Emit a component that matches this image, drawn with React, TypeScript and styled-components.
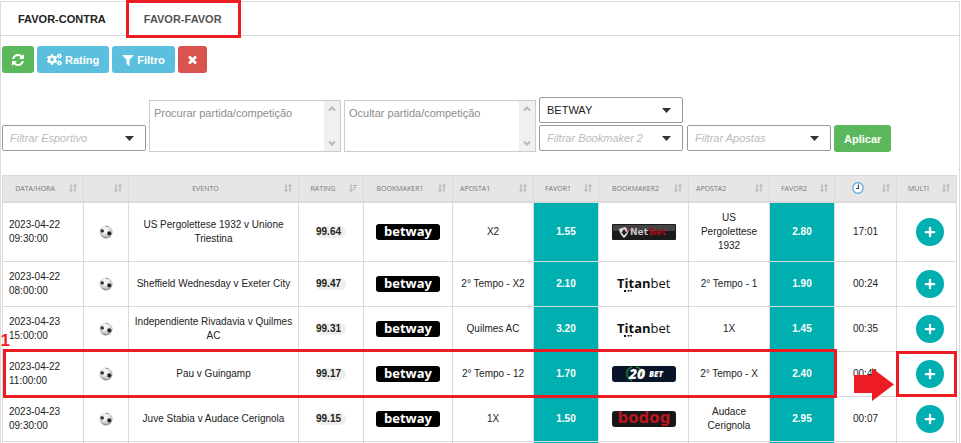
import React from "react";
import styled, { createGlobalStyle } from "styled-components";
import { FaCogs, FaPlus } from "react-icons/fa";

const GlobalStyle = createGlobalStyle`
  * { box-sizing: border-box; }
  html { overflow: hidden; }
  body {
    margin: 0;
    background: #fff;
    color: #222;
    font-family: "Liberation Sans", Arial, sans-serif;
    font-size: 10px;
    line-height: 14px;
  }
`;

const Panel = styled.main`
  margin: 1px 1px 0 0;
  border: 1px solid #dcdcdc;
  border-bottom: 0;
`;

const Tabs = styled.nav`
  display: flex;
  height: 34px;
  border-bottom: 1px solid #dcdcdc;
`;

const Tab = styled.button<{ $current?: boolean }>`
  position: relative;
  border: 0;
  background: none;
  padding: 0 17px;
  margin-right: 4px;
  font: bold 11px "Liberation Sans", Arial, sans-serif;
  color: ${(p) => (p.$current ? "#555" : "#222")};
`;

const TabMark = styled.span`
  position: absolute;
  inset: -2px -2px -3px -1px;
  border: 3px solid #ed1c24;
  pointer-events: none;
`;

const Content = styled.div`
  padding: 10px 2px 0 1px;
`;

const Toolbar = styled.div`
  display: flex;
  gap: 3px;
  margin-bottom: 24px;
`;

const colors = { green: "#5cb85c", blue: "#5bc0de", red: "#d9534f" };

const Button = styled.button<{ $tone: keyof typeof colors }>`
  display: flex;
  align-items: center;
  justify-content: center;
  gap: 3px;
  height: 27px;
  padding: 0 10px;
  border: 0;
  border-radius: 3px;
  background: ${(p) => colors[p.$tone]};
  color: #fff;
  font: bold 11px "Liberation Sans", Arial, sans-serif;
`;

const Filters = styled.form`
  display: flex;
  align-items: flex-end;
  gap: 3px;
  margin-bottom: 23px;
`;

const Stack = styled.div`
  display: grid;
  gap: 1px;
  margin-right: 1px;
`;

const SelectBox = styled.label`
  display: grid;
  grid-template-columns: 1fr 20px;
  align-items: center;
  width: 144px;
  height: 26px;
  margin-bottom: 1px;
  border: 1px solid #999;
  border-radius: 2px;

  svg { grid-area: 1 / 2; pointer-events: none; }
`;

const Select = styled.select<{ $empty: boolean }>`
  grid-area: 1 / 1 / 2 / 3;
  height: 100%;
  padding: 0 7px;
  border: 0;
  appearance: none;
  background: none;
  color: ${(p) => (p.$empty ? "#bbb" : "#222")};
  font-family: "Liberation Sans", Arial, sans-serif;
  font-size: 11px;
  font-style: ${(p) => (p.$empty ? "italic" : "normal")};
`;

const AreaBox = styled.div`
  display: flex;
  width: 192px;
  height: 52px;
  border: 1px solid #ccc;
`;

const Area = styled.textarea`
  flex: 1;
  min-width: 0;
  padding: 6px 0 0 4px;
  border: 0;
  resize: none;
  overflow: hidden;
  font: 11px "Liberation Sans", Arial, sans-serif;
  &::placeholder { color: #8c8c8c; }
`;

const Rail = styled.div`
  display: flex;
  flex-direction: column;
  justify-content: space-between;
  align-items: center;
  width: 16px;
  padding: 4px 0;
  background: #f0f0f0;
`;

const Table = styled.table`
  width: 100%;
  table-layout: fixed;
  border-collapse: collapse;
`;

const HeadCell = styled.th`
  height: 26px;
  padding: 0 6px 0 4px;
  border: 1px solid #dadada;
  border-bottom: 2px solid #dadada;
  background: #e6e6e6;
  color: #777;
  font: 7px "Open Sans", sans-serif;
`;

const HeadInner = styled.div<{ $start?: boolean }>`
  display: flex;
  align-items: center;
  gap: 6px;
  padding-left: ${(p) => (p.$start ? "3px" : "0")};

  span {
    flex: 1;
    display: flex;
    justify-content: ${(p) => (p.$start ? "flex-start" : "center")};
  }
`;

const Row = styled.tr`
  position: relative;
`;

const Cell = styled.td<{ $odds?: boolean }>`
  position: ${(p) => (p.$odds ? "static" : "relative")};
  padding: 8px 6px;
  border: 1px solid #dadada;
  text-align: center;
  vertical-align: middle;
  background: ${(p) => (p.$odds ? "#00afb0" : "transparent")};
  color: ${(p) => (p.$odds ? "#fff" : "inherit")};
  font-weight: ${(p) => (p.$odds ? "bold" : "normal")};

  > svg { display: block; margin: 0 auto; overflow: visible; }
`;

const DateCell = styled(Cell)`
  position: static;
  text-align: left;
`;

const EventCell = styled(Cell)`
  padding: 8px 2px;
`;

const ActionCell = styled(Cell)`
  padding: 8px 4px 8px 11px;
`;

const CutCell = styled(Cell)`
  height: 8px;
  padding: 0;
`;

const Rating = styled.b`
  display: inline-block;
  padding-right: 5px;
  border-radius: 6px;
  background: #eeeeea;
  line-height: 12px;
`;

const AddButton = styled.button`
  display: flex;
  align-items: center;
  justify-content: center;
  width: 28px;
  height: 28px;
  margin: 0 auto;
  padding: 0;
  border: 0;
  border-radius: 50%;
  background: #00afb0;
  color: #fff;
`;

const RowMark = styled.span`
  position: absolute;
  z-index: 1;
  top: -2px;
  bottom: -2px;
  left: 0;
  width: 87.5%;
  border: 3px solid #ed1c24;
  pointer-events: none;
`;

const MarkNumber = styled.span`
  position: absolute;
  left: -5px;
  top: -21px;
  color: #ed1c24;
  font: bold 17px "Liberation Sans", Arial, sans-serif;
`;

const CellMark = styled.span`
  position: absolute;
  inset: -1px;
  border: 3px solid #ed1c24;
  pointer-events: none;
`;

const ArrowMark = styled.span`
  position: absolute;
  z-index: 1;
  right: 2px;
  top: 16px;
  svg { display: block; }
`;

const RefreshIcon = () => (
  <svg width="12" height="14" viewBox="0 0 1536 1792" fill="currentColor">
    <path d="M1511 1056q0 5-1 7-64 268-268 434.5t-478 166.5q-146 0-282.5-55t-243.5-157l-129 129q-19 19-45 19t-45-19-19-45v-448q0-26 19-45t45-19h448q26 0 45 19t19 45-19 45l-137 137q71 66 161 102t187 36q134 0 250-65t186-179q11-17 53-117 8-23 30-23h192q13 0 22.5 9.5t9.5 22.5zm25-800v448q0 26-19 45t-45 19h-448q-26 0-45-19t-19-45 19-45l138-138q-148-137-349-137-134 0-250 65t-186 179q-11 17-53 117-8 23-30 23h-199q-13 0-22.5-9.5t-9.5-22.5v-7q65-268 270-434.5t480-166.5q146 0 284 55.5t245 156.5l130-129q19-19 45-19t45 19 19 45z" />
  </svg>
);

const FilterIcon = () => (
  <svg width="12" height="14" viewBox="128 0 1536 1792" fill="currentColor">
    <path d="M1595 295q17 41-14 70l-493 493v742q0 42-39 59-13 5-25 5-27 0-45-19l-256-256q-19-19-19-45v-486l-493-493q-31-29-14-70 17-39 59-39h1280q42 0 59 39z" />
  </svg>
);

const CloseIcon = () => (
  <svg width="9" height="14" viewBox="256 64 1280 1792" fill="currentColor">
    <path d="M1490 1322q0 40-28 68l-136 136q-28 28-68 28t-68-28l-294-294-294 294q-28 28-68 28t-68-28l-136-136q-28-28-28-68t28-68l294-294-294-294q-28-28-28-68t28-68l136-136q28-28 68-28t68 28l294 294 294-294q28-28 68-28t68 28l136 136q28 28 28 68t-28 68l-294 294 294 294q28 28 28 68z" />
  </svg>
);

const Caret = () => (
  <svg width="9" height="5" viewBox="0 0 9 5">
    <path d="M0 0H9L4.500 5Z" fill="#333" />
  </svg>
);

const Chevron = ({ down }: { down?: boolean }) => (
  <svg width="8" height="7" viewBox="0 0 8 7" fill="none" stroke="#b8b8b8" strokeWidth="2">
    <path d={down ? "M1 1.500L4 4.500L7 1.500" : "M1 5.500L4 2.500L7 5.500"} />
  </svg>
);

const SortIcon = ({ amount }: { amount?: boolean }) => (
  <svg width="8" height="9" viewBox="0 0 8 9" fill="none" stroke="#aaa">
    <path d="M2 0V7M0 5.500L2 7.500L4 5.500" />
    {amount ? <path d="M4 1.500H8M4.500 3.500H7M4.500 5.500H6" /> : <path d="M6 8V1M4 2.500L6 0.500L8 2.500" />}
  </svg>
);

const ClockIcon = () => (
  <svg width="12" height="12" viewBox="0 0 12 12">
    <circle cx="6" cy="6" r="5.200" fill="#fff" stroke="#6aaee0" strokeWidth="1.400" />
    <path d="M6.500 2.500V6.500H4" fill="none" stroke="#444" strokeWidth="1.200" />
  </svg>
);

const BallIcon = () => (
  <svg width="14" height="14" viewBox="0 0 14 14">
    <defs>
      <radialGradient id="ball" cx="0.45" cy="0.35" r="0.7">
        <stop offset="0.3" stopColor="#f2f2f2" />
        <stop offset="0.7" stopColor="#c4c4c4" />
        <stop offset="1" stopColor="#777" />
      </radialGradient>
    </defs>
    <circle cx="7" cy="7" r="6.500" fill="url(#ball)" />
    <path d="M1.600 4.200L4.500 4.400L5 6.800L3.300 7.800L1.600 7Z" fill="#333" />
    <path d="M8.500 6.800L11 6.200L12.600 8.400L11 10.600L8.400 9.800Z" fill="#1e1e1e" />
    <path d="M6 0.700L9.500 1.300L8.500 2.300Z M3.800 11.500L6.300 12L6.500 13.400Z" fill="#777" />
  </svg>
);

const Betway = () => (
  <svg width="64" height="16" viewBox="0 0 64 16" role="img" aria-label="betway">
    <rect width="64" height="16" rx="3" />
    <text x="32" y="12" textAnchor="middle" fill="#fff" fontFamily="Open Sans" fontWeight="700" fontSize="13">betway</text>
  </svg>
);

const NetBet = () => (
  <svg width="64" height="16" viewBox="0 0 64 16" role="img" aria-label="NetBet">
    <rect width="64" height="16" rx="1" fill="#1b1b1b" />
    <rect x="1" y="1" width="62" height="6" fill="#444" />
    <path d="M7 5L13 3L17 5.500Q16 11 12 14Q8 11 7 5Z" fill="#ddd" />
    <path d="M12 5L15 9L13 10V11H11V10L9.500 8.500Z" fill="#223" />
    <path d="M14 3L17 5L16 9Z" fill="#b01318" />
    <text x="18" y="11" fill="#c4c4c4" fontFamily="DejaVu Sans" fontWeight="700" fontSize="9">Net</text>
    <text x="37" y="11" fill="#a80f12" fontFamily="DejaVu Sans" fontWeight="700" fontSize="9">Bet</text>
  </svg>
);

const Titanbet = () => (
  <svg width="64" height="16" viewBox="0 0 64 16" role="img" aria-label="Titanbet">
    <text x="5" y="12" fill="#111" fontFamily="Open Sans" fontSize="13">
      <tspan fontWeight="700">Titan</tspan><tspan fontWeight="400">bet</tspan>
    </text>
    <path d="M12 14H14V16H12ZM15.500 14H17.500V15.500H15.500ZM18.500 14H20V15.500H18.500Z" fill="#111" />
  </svg>
);

const TwentyBet = () => (
  <svg width="64" height="16" viewBox="0 0 64 16" role="img" aria-label="20BET">
    <rect width="64" height="16" rx="3" fill="#0a1429" />
    <path d="M20 1Q14 3 15 9Q16 13 20 15M24 1Q30 2 30 8" fill="none" stroke="#1d7d2c" strokeWidth="1.500" />
    <text x="17" y="13" fill="#fff" fontFamily="Open Sans" fontStyle="italic" fontWeight="800" fontSize="14">20</text>
    <text x="37" y="11" fill="#fff" fontFamily="Open Sans" fontStyle="italic" fontWeight="800" fontSize="8">BET</text>
  </svg>
);

const Bodog = () => (
  <svg width="64" height="16" viewBox="0 0 64 16" role="img" aria-label="bodog">
    <rect width="64" height="16" rx="3" fill="#171717" />
    <text x="32" y="12" textAnchor="middle" fill="#b8161e" fontFamily="DejaVu Sans" fontWeight="700" fontSize="15">bodog</text>
  </svg>
);

const logos = { netbet: NetBet, titanbet: Titanbet, twenty: TwentyBet, bodog: Bodog };

type Bet = {
  date: string;
  time: string;
  event: string;
  rating: string;
  bet1: string;
  odds1: string;
  book2: keyof typeof logos;
  bet2: string;
  odds2: string;
  age: string;
  marked?: boolean;
};

const bets: Bet[] = [
  { date: "2023-04-22", time: "09:30:00", event: "US Pergolettese 1932 v Unione Triestina", rating: "99.64", bet1: "X2", odds1: "1.55", book2: "netbet", bet2: "US Pergolettese 1932", odds2: "2.80", age: "17:01" },
  { date: "2023-04-22", time: "08:00:00", event: "Sheffield Wednesday v Exeter City", rating: "99.47", bet1: "2° Tempo - X2", odds1: "2.10", book2: "titanbet", bet2: "2° Tempo - 1", odds2: "1.90", age: "00:24" },
  { date: "2023-04-23", time: "15:00:00", event: "Independiente Rivadavia v Quilmes AC", rating: "99.31", bet1: "Quilmes AC", odds1: "3.20", book2: "titanbet", bet2: "1X", odds2: "1.45", age: "00:35" },
  { date: "2023-04-22", time: "11:00:00", event: "Pau v Guingamp", rating: "99.17", bet1: "2° Tempo - 12", odds1: "1.70", book2: "twenty", bet2: "2° Tempo - X", odds2: "2.40", age: "00:41", marked: true },
  { date: "2023-04-23", time: "09:30:00", event: "Juve Stabia v Audace Cerignola", rating: "99.15", bet1: "1X", odds1: "1.50", book2: "bodog", bet2: "Audace Cerignola", odds2: "2.95", age: "00:07" },
];

const columns: { label: React.ReactNode; width: number; start?: boolean }[] = [
  { label: "DATA/HORA", width: 81 },
  { label: "", width: 45 },
  { label: "EVENTO", width: 170 },
  { label: "RATING", width: 65 },
  { label: "BOOKMAKER1", width: 89 },
  { label: "APOSTA1", width: 81, start: true },
  { label: "FAVOR1", width: 65 },
  { label: "BOOKMAKER2", width: 90 },
  { label: "APOSTA2", width: 81, start: true },
  { label: "FAVOR2", width: 65 },
  { label: <ClockIcon />, width: 62 },
  { label: "MULTI", width: 60 },
];

const Dropdown = ({ text, empty = true }: { text: string; empty?: boolean }) => (
  <SelectBox>
    <Select $empty={empty} aria-label={text}>
      <option>{text}</option>
    </Select>
    <Caret />
  </SelectBox>
);

const SearchArea = ({ text }: { text: string }) => (
  <AreaBox>
    <Area placeholder={text} aria-label={text} />
    <Rail>
      <Chevron />
      <Chevron down />
    </Rail>
  </AreaBox>
);

const BetRow = ({ bet }: { bet: Bet }) => {
  const Logo = logos[bet.book2];
  return (
    <Row>
      <DateCell>
        {bet.date}
        <br />
        {bet.time}
        {bet.marked && (
          <RowMark>
            <MarkNumber>1</MarkNumber>
          </RowMark>
        )}
      </DateCell>
      <Cell><BallIcon /></Cell>
      <EventCell>{bet.event}</EventCell>
      <Cell><Rating>{bet.rating}</Rating></Cell>
      <Cell><Betway /></Cell>
      <Cell>{bet.bet1}</Cell>
      <Cell $odds>{bet.odds1}</Cell>
      <Cell><Logo /></Cell>
      <Cell>{bet.bet2}</Cell>
      <Cell $odds>{bet.odds2}</Cell>
      <Cell>
        {bet.age}
        {bet.marked && (
          <ArrowMark>
            <svg width="40" height="33" viewBox="0 0 40 33">
              <path d="M0 7H18V0L40 16.500L18 33V25H0Z" fill="#ed1c24" />
            </svg>
          </ArrowMark>
        )}
      </Cell>
      <ActionCell>
        <AddButton aria-label="Multi"><FaPlus size={12} /></AddButton>
        {bet.marked && <CellMark />}
      </ActionCell>
    </Row>
  );
};

export default function App() {
  return (
    <>
      <GlobalStyle />
      <Panel>
        <Tabs>
          <Tab>FAVOR-CONTRA</Tab>
          <Tab $current>
            FAVOR-FAVOR
            <TabMark />
          </Tab>
        </Tabs>
        <Content>
          <Toolbar>
            <Button $tone="green" aria-label="Atualizar"><RefreshIcon /></Button>
            <Button $tone="blue"><FaCogs size={15} />Rating</Button>
            <Button $tone="blue"><FilterIcon />Filtro</Button>
            <Button $tone="red" aria-label="Fechar"><CloseIcon /></Button>
          </Toolbar>
          <Filters onSubmit={(e) => e.preventDefault()}>
            <Dropdown text="Filtrar Esportivo" />
            <SearchArea text="Procurar partida/competição" />
            <SearchArea text="Ocultar partida/competição" />
            <Stack>
              <Dropdown text="BETWAY" empty={false} />
              <Dropdown text="Filtrar Bookmaker 2" />
            </Stack>
            <Dropdown text="Filtrar Apostas" />
            <Button $tone="green">Aplicar</Button>
          </Filters>
          <Table>
            <colgroup>
              {columns.map((c, i) => <col key={i} width={c.width} />)}
            </colgroup>
            <thead>
              <tr>
                {columns.map((c, i) => (
                  <HeadCell key={i}>
                    <HeadInner $start={c.start}>
                      <span>{c.label}</span>
                      <SortIcon amount={c.label === "RATING"} />
                    </HeadInner>
                  </HeadCell>
                ))}
              </tr>
            </thead>
            <tbody>
              {bets.map((bet) => <BetRow key={bet.rating} bet={bet} />)}
              <tr>
                {columns.map((c, i) => <CutCell key={i} $odds={i === 6 || i === 9} />)}
              </tr>
            </tbody>
          </Table>
        </Content>
      </Panel>
    </>
  );
}
